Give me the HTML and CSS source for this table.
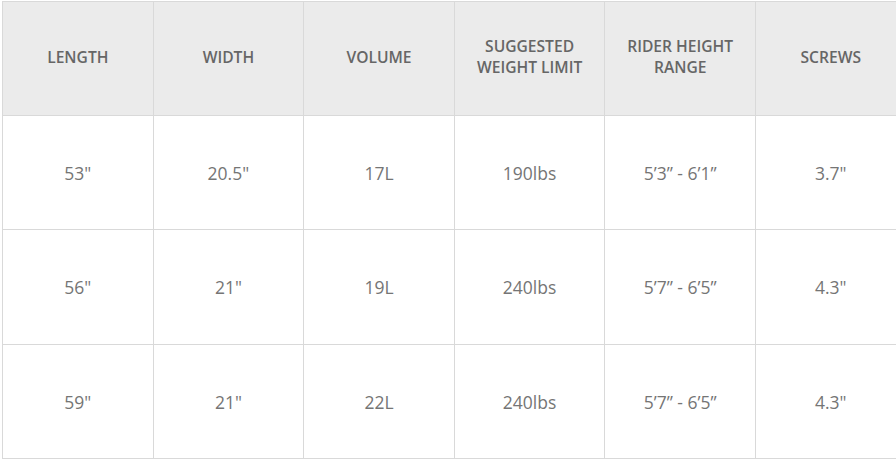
FILE: index.html
```html
<!DOCTYPE html>
<html>
<head>
<meta charset="utf-8">
<link rel="stylesheet" href="styles.css">
</head>
<body>
<table class="spec">
  <colgroup>
    <col class="c"><col class="c"><col class="c"><col class="c"><col class="c"><col class="c">
  </colgroup>
  <thead>
    <tr class="head">
      <th>LENGTH</th>
      <th>WIDTH</th>
      <th>VOLUME</th>
      <th>SUGGESTED<br>WEIGHT LIMIT</th>
      <th>RIDER HEIGHT<br>RANGE</th>
      <th>SCREWS</th>
    </tr>
  </thead>
  <tbody>
    <tr class="r1">
      <td>53"</td><td>20.5"</td><td>17L</td><td>190lbs</td><td>5’3” - 6’1”</td><td>3.7"</td>
    </tr>
    <tr class="r2">
      <td>56"</td><td>21"</td><td>19L</td><td>240lbs</td><td>5’7” - 6’5”</td><td>4.3"</td>
    </tr>
    <tr class="r3">
      <td>59"</td><td>21"</td><td>22L</td><td>240lbs</td><td>5’7” - 6’5”</td><td>4.3"</td>
    </tr>
  </tbody>
</table>
</body>
</html>
```
FILE: styles.css
```css
html, body {
  margin: 0;
  padding: 0;
  background: #ffffff;
  overflow: hidden;
}
body {
  padding: 1px 0 0 2px;
  font-family: "Open Sans", "DejaVu Sans", sans-serif;
}
.spec {
  border-collapse: collapse;
  table-layout: fixed;
  width: 904px;
}
.spec .c {
  width: 150.6px;
}
.spec th,
.spec td {
  border: 1px solid #d9d9d9;
  text-align: center;
  vertical-align: middle;
  padding: 0;
}
.spec th {
  background: #ebebeb;
  color: #666666;
  font-weight: 600;
  font-size: 15.6px;
  line-height: 21px;
  padding-bottom: 3px;
}
.spec td {
  color: #757575;
  font-size: 17.5px;
  font-weight: 400;
}
.head { height: 114px; }
.r1 { height: 114px; }
.r2 { height: 115px; }
.r3 { height: 114px; }
```
